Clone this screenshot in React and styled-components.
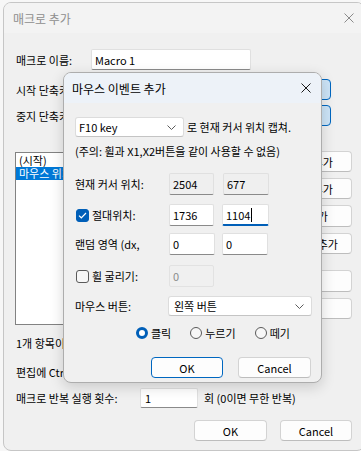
import React from 'react';
import styled, { createGlobalStyle } from 'styled-components';

const GlobalStyle = createGlobalStyle`
  html, body {
    margin: 0;
    padding: 0;
    overflow: hidden;
    background: #f7f7f7;
  }
  body {
    font-family: "Noto Sans CJK KR", "Noto Sans", sans-serif;
    font-size: 11px;
    color: #000;
  }
`;

function CloseIcon({ color }) {
  return (
    <svg width="10" height="10" viewBox="0 0 10 10">
      <path d="M0.5 0.5 L9.5 9.5 M9.5 0.5 L0.5 9.5" stroke={color} strokeWidth="1" fill="none" />
    </svg>
  );
}

function Chevron() {
  return (
    <svg width="9" height="5" viewBox="0 0 9 5">
      <path d="M0.5 0.5 L4.5 4.5 L8.5 0.5" stroke="#5c5c5c" strokeWidth="1" fill="none" />
    </svg>
  );
}

function CheckIcon() {
  return (
    <svg width="9" height="7" viewBox="0 0 9 7">
      <path d="M1 3.6 L3.3 5.8 L8 1" stroke="#fff" strokeWidth="1.2" fill="none" />
    </svg>
  );
}

export default function App() {
  return (
    <>
      <GlobalStyle />
      <Window>
        <TitleBar>
          <span>매크로 추가</span>
          <CloseBox>
            <CloseIcon color="#8a8a8a" />
          </CloseBox>
        </TitleBar>
        <Body>
          <Row $h={21}>
            <Label $w={75}>매크로 이름:</Label>
            <Field $w={160} $h={21}>Macro 1</Field>
          </Row>
          <Row $h={21} $mt={9}>
            <Label $w={75}>시작 단축키:</Label>
            <HotkeyBox />
          </Row>
          <Row $h={21} $mt={5}>
            <Label $w={75}>중지 단축키:</Label>
            <HotkeyBox />
          </Row>

          <ListSection>
            <ListBox>
              <ListItem>(시작)</ListItem>
              <ListItem $selected>마우스 위치</ListItem>
            </ListBox>
            <ButtonColumn>
              <Button $w={114}>키보드 입력 추가</Button>
              <Button $w={114} $mt={6}>마우스 동작 추가</Button>
              <Button $w={114} $mt={6} $h={22}>대기 시간 추가</Button>
              <Button $w={114} $mt={6}>마우스 이벤트 추가</Button>
              <Button $w={114} $mt={16} $h={22}>편집</Button>
              <Button $w={114} $mt={6}>삭제</Button>
            </ButtonColumn>
          </ListSection>

          <Note $mt={10}>1개 항목이</Note>
          <Note $mt={13}>편집에 Ctrl</Note>

          <Row $h={20} $mt={8}>
            <Label $w={124}>매크로 반복 실행 횟수:</Label>
            <Field $w={58} $h={20} $pad={4}>1</Field>
            <Suffix>회 (0이면 무한 반복)</Suffix>
          </Row>

          <Actions $mt={12}>
            <Button $w={73}>OK</Button>
            <Button $w={72}>Cancel</Button>
          </Actions>
        </Body>

        <Dialog>
          <TitleBar $active>
            <span>마우스 이벤트 추가</span>
            <CloseBox>
              <CloseIcon color="#1a1a1a" />
            </CloseBox>
          </TitleBar>
          <DialogBody>
            <Row $h={20}>
              <Combo $w={109}>
                <span>F10 key</span>
                <Chevron />
              </Combo>
              <Suffix $ml={3}>로 현재 커서 위치 캡쳐.</Suffix>
            </Row>
            <Note $mt={6}>(주의: 휠과 X1,X2버튼을 같이 사용할 수 없음)</Note>

            <Row $h={22} $mt={14}>
              <Label $w={94}>현재 커서 위치:</Label>
              <Field $w={45} $variant="readonly">2504</Field>
              <Field $w={46} $ml={9} $variant="readonly">677</Field>
            </Row>
            <Row $h={22} $mt={9}>
              <Label $w={94}>
                <CheckLabel>
                  <CheckBox $checked>
                    <CheckIcon />
                  </CheckBox>
                  절대위치:
                </CheckLabel>
              </Label>
              <Field $w={45}>1736</Field>
              <Field $w={47} $ml={8} $variant="focus">
                1104
                <Caret />
              </Field>
            </Row>
            <Row $h={22} $mt={7}>
              <Label $w={94}>랜덤 영역 (dx,</Label>
              <Field $w={46}>0</Field>
              <Field $w={46} $ml={7}>0</Field>
            </Row>
            <Row $h={22} $mt={10}>
              <Label $w={94}>
                <CheckLabel>
                  <CheckBox />
                  휠 굴리기:
                </CheckLabel>
              </Label>
              <Field $w={45} $variant="disabled">0</Field>
            </Row>
            <Row $h={20} $mt={9}>
              <Label $w={93}>마우스 버튼:</Label>
              <Combo $w={144} $pad={5}>
                <span>왼쪽 버튼</span>
                <Chevron />
              </Combo>
            </Row>

            <RadioGroup>
              <RadioItem>
                <Radio $checked />
                클릭
              </RadioItem>
              <RadioItem>
                <Radio />
                누르기
              </RadioItem>
              <RadioItem>
                <Radio />
                떼기
              </RadioItem>
            </RadioGroup>

            <DialogActions>
              <Button $w={72} $default>OK</Button>
              <Button $w={73}>Cancel</Button>
            </DialogActions>
          </DialogBody>
        </Dialog>
      </Window>
    </>
  );
}

const Window = styled.div`
  position: relative;
  box-sizing: border-box;
  margin: 2px 0 0 3px;
  width: 362px;
  height: 449px;
  border: 1px solid #c6c6c6;
  border-radius: 8px;
  background: #f0f0f0;
  overflow: hidden;
`;

const TitleBar = styled.div`
  display: flex;
  align-items: center;
  justify-content: space-between;
  height: 30px;
  flex: none;
  padding-left: ${(p) => (p.$active ? 8 : 9)}px;
  background: ${(p) => (p.$active ? '#edf2f8' : '#f3f3f3')};
  color: ${(p) => (p.$active ? '#000' : '#8e8e8e')};
  font-size: 12px;
`;

const CloseBox = styled.div`
  width: 30px;
  height: 30px;
  display: flex;
  align-items: center;
  justify-content: center;
`;

const Body = styled.div`
  display: flex;
  flex-direction: column;
  padding: 16px 12px 0 12px;
`;

const Row = styled.div`
  display: flex;
  align-items: center;
  height: ${(p) => p.$h || 21}px;
  margin-top: ${(p) => p.$mt || 0}px;
  flex: none;
`;

const Label = styled.div`
  width: ${(p) => p.$w}px;
  flex: none;
  white-space: nowrap;
  overflow: hidden;
`;

const fieldBg = { normal: '#fff', focus: '#fff', readonly: '#efefef', disabled: '#f0f0f0' };

const Field = styled.div`
  box-sizing: border-box;
  display: flex;
  align-items: center;
  flex: none;
  width: ${(p) => p.$w}px;
  height: ${(p) => p.$h || 22}px;
  margin-left: ${(p) => p.$ml || 0}px;
  padding-left: ${(p) => p.$pad || 3}px;
  background: ${(p) => fieldBg[p.$variant || 'normal']};
  border: 1px solid ${(p) => (p.$variant === 'disabled' ? '#e2e2e2' : '#e0e0e0')};
  border-bottom: ${(p) =>
    p.$variant === 'focus'
      ? '2px solid #005fb8'
      : p.$variant === 'disabled'
      ? '1px solid #e2e2e2'
      : '1px solid #8a8a8a'};
  border-radius: 2px;
  color: ${(p) => (p.$variant === 'disabled' ? '#8c8c8c' : '#000')};
`;

const Caret = styled.span`
  display: inline-block;
  width: 1px;
  height: 14px;
  margin-left: 1px;
  background: #000;
`;

const HotkeyBox = styled.div`
  box-sizing: border-box;
  width: 240px;
  height: 21px;
  background: #cce4f7;
  border: 1px solid #0067c0;
  border-radius: 4px;
`;

const ListSection = styled.div`
  display: flex;
  justify-content: space-between;
  align-items: flex-start;
  margin-top: 25px;
`;

const ListBox = styled.div`
  box-sizing: border-box;
  width: 216px;
  height: 173px;
  margin: 1px 0 0 -1px;
  padding: 1px 0 0 0;
  background: #fff;
  border: 1px solid #828282;
`;

const ListItem = styled.div`
  height: 13px;
  line-height: 13px;
  padding-left: 3px;
  white-space: nowrap;
  overflow: hidden;
  background: ${(p) => (p.$selected ? '#0078d7' : 'transparent')};
  color: ${(p) => (p.$selected ? '#fff' : '#000')};
`;

const ButtonColumn = styled.div`
  display: flex;
  flex-direction: column;
`;

const Button = styled.div`
  box-sizing: border-box;
  flex: none;
  width: ${(p) => p.$w}px;
  height: ${(p) => p.$h || 21}px;
  margin-top: ${(p) => p.$mt || 0}px;
  display: flex;
  align-items: center;
  justify-content: center;
  white-space: nowrap;
  background: #fdfdfd;
  border: 1px solid ${(p) => (p.$default ? '#0067c0' : '#d3d3d3')};
  border-bottom-color: ${(p) => (p.$default ? '#0067c0' : '#bdbdbd')};
  border-radius: 4px;
  color: #000;
`;

const Note = styled.div`
  height: 16px;
  line-height: 16px;
  margin-top: ${(p) => p.$mt || 0}px;
  white-space: nowrap;
`;

const Suffix = styled.span`
  margin-left: ${(p) => p.$ml ?? 6}px;
  white-space: nowrap;
`;

const Actions = styled.div`
  display: flex;
  justify-content: flex-end;
  gap: 13px;
  margin-top: ${(p) => p.$mt || 0}px;
`;

const Dialog = styled.div`
  position: absolute;
  left: 59px;
  top: 69px;
  width: 259px;
  height: 311px;
  box-sizing: border-box;
  display: flex;
  flex-direction: column;
  background: #f0f0f0;
  border: 1px solid #adadad;
  border-radius: 8px;
  overflow: hidden;
  box-shadow: 0 4px 14px rgba(0, 0, 0, 0.16);
`;

const DialogBody = styled.div`
  display: flex;
  flex-direction: column;
  padding: 14px 10px 0 11px;
`;

const Combo = styled.div`
  box-sizing: border-box;
  flex: none;
  width: ${(p) => p.$w}px;
  height: 20px;
  display: flex;
  align-items: center;
  justify-content: space-between;
  padding: 0 7px 0 ${(p) => p.$pad || 3}px;
  background: #fff;
  border: 1px solid #dcdcdc;
  border-bottom-color: #c4c4c4;
  border-radius: 3px;
`;

const CheckLabel = styled.span`
  display: flex;
  align-items: center;
  gap: 3px;
  padding-left: 1px;
`;

const CheckBox = styled.span`
  box-sizing: border-box;
  width: 13px;
  height: 13px;
  display: flex;
  align-items: center;
  justify-content: center;
  border-radius: 3px;
  background: ${(p) => (p.$checked ? '#005fb8' : '#f7f7f7')};
  border: 1px solid ${(p) => (p.$checked ? '#005fb8' : '#5a5a5a')};
`;

const RadioGroup = styled.div`
  display: flex;
  align-items: center;
  gap: 19px;
  height: 16px;
  margin: 9px 0 0 61px;
`;

const RadioItem = styled.span`
  display: flex;
  align-items: center;
  gap: 3px;
  white-space: nowrap;
`;

const Radio = styled.span`
  box-sizing: border-box;
  width: 12px;
  height: 12px;
  border-radius: 50%;
  background: ${(p) => (p.$checked ? '#fff' : '#f7f7f7')};
  border: ${(p) => (p.$checked ? '3.5px solid #005fb8' : '1px solid #5a5a5a')};
`;

const DialogActions = styled.div`
  display: flex;
  justify-content: flex-end;
  gap: 15px;
  margin-top: 16px;
`;
